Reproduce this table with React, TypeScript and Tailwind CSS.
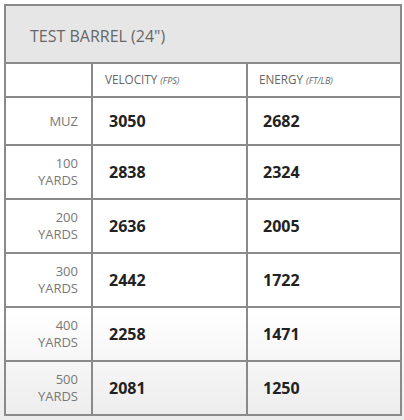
const rows = [
  { range: ["MUZ"], velocity: 3050, energy: 2682, h: "h-[48px]" },
  { range: ["100", "YARDS"], velocity: 2838, energy: 2324, h: "h-[54px]" },
  { range: ["200", "YARDS"], velocity: 2636, energy: 2005, h: "h-[54px]" },
  { range: ["300", "YARDS"], velocity: 2442, energy: 1722, h: "h-[54px]" },
  { range: ["400", "YARDS"], velocity: 2258, energy: 1471, h: "h-[54px]" },
  { range: ["500", "YARDS"], velocity: 2081, energy: 1250, h: "h-[54px]" },
];

export default function App() {
  return (
    <div className="w-[404px] h-[420px] p-[4px] bg-[linear-gradient(to_bottom,#ffffff_0px,#ffffff_310px,#ececec_420px)] font-['Open_Sans',sans-serif]">
      <table className="w-[396px] border-collapse border-2 border-[#8a8a8a] table-fixed">
        <colgroup>
          <col className="w-[87px]" />
          <col className="w-[155px]" />
          <col className="w-[154px]" />
        </colgroup>
        <thead>
          <tr className="h-[58px] bg-[#e6e6e6]">
            <th colSpan={3} className="border-2 border-[#8a8a8a] text-left font-normal text-[16px] text-[#666] pl-[24px] pt-[4px]">
              TEST BARREL (24")
            </th>
          </tr>
          <tr className="h-[34px]">
            <th className="border-2 border-[#8a8a8a]" />
            <th className="border-2 border-[#8a8a8a] text-left font-normal text-[11.7px] text-[#666] pl-[12px]">
              VELOCITY <i className="text-[9px]">(FPS)</i>
            </th>
            <th className="border-2 border-[#8a8a8a] text-left font-normal text-[11.7px] text-[#666] pl-[11px]">
              ENERGY <i className="text-[9px]">(FT/LB)</i>
            </th>
          </tr>
        </thead>
        <tbody>
          {rows.map((r) => (
            <tr key={r.range.join(" ")} className={r.h}>
              <td className="border-2 border-[#8a8a8a] text-right text-[13px] leading-[17px] text-[#777] pr-[13px]">
                {r.range.map((l) => (
                  <div key={l}>{l}</div>
                ))}
              </td>
              <td className="border-2 border-[#8a8a8a] text-left font-bold text-[16px] text-[#222] pl-[16px]">
                {r.velocity}
              </td>
              <td className="border-2 border-[#8a8a8a] text-left font-bold text-[16px] text-[#222] pl-[15px]">
                {r.energy}
              </td>
            </tr>
          ))}
        </tbody>
      </table>
    </div>
  );
}
